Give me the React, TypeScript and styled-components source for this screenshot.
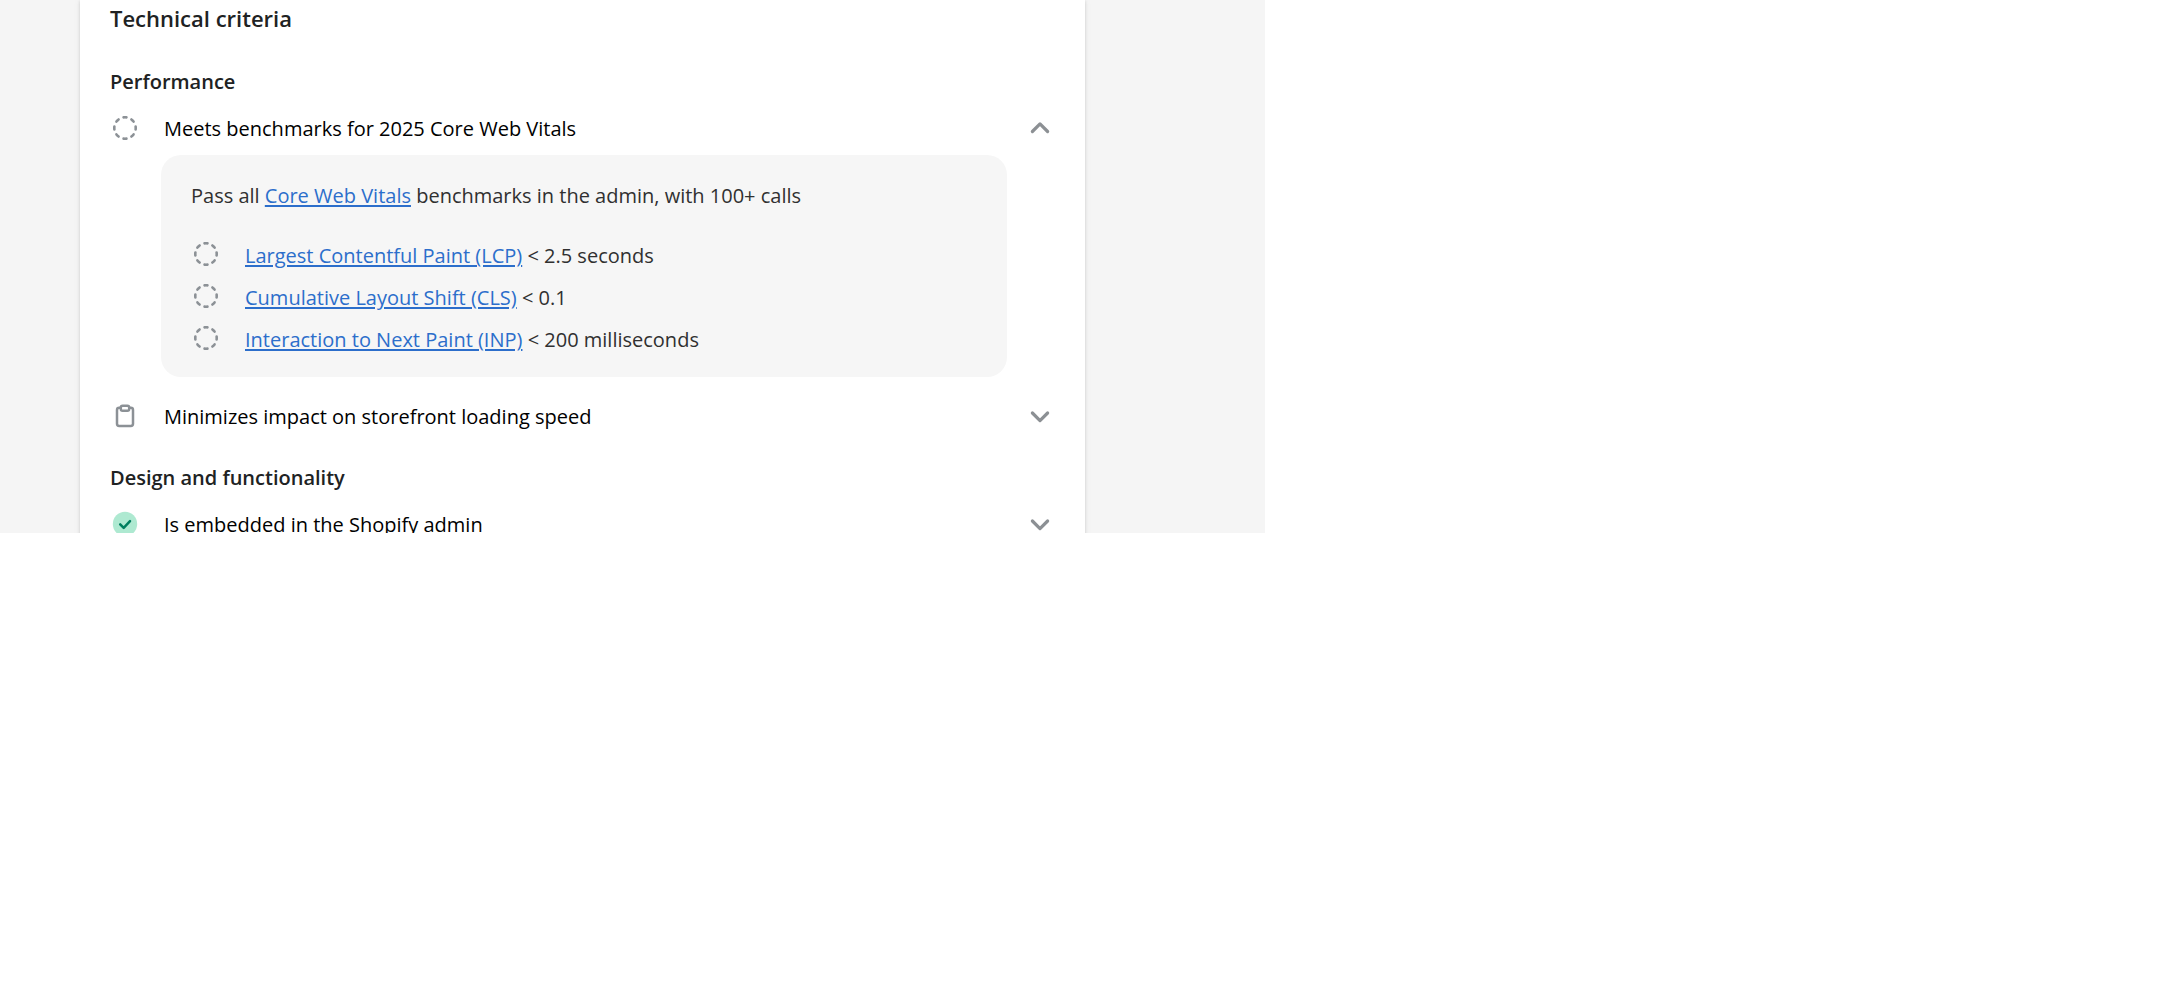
import React, { useState } from "react";
import styled, { createGlobalStyle } from "styled-components";

const GlobalStyle = createGlobalStyle`
  *, *::before, *::after { box-sizing: border-box; }
  body {
    margin: 0;
    background: #fff;
    color: #202223;
    font-family: "Segoe UI", "Open Sans", "Noto Sans", sans-serif;
    font-size: 20px;
    line-height: 32px;
  }
`;

const Viewport = styled.main`
  display: flex;
  max-width: 1265px;
  height: 533px;
  padding: 0 180px 0 80px;
  overflow: hidden;
  background: #f5f5f5;
`;

const Card = styled.article`
  flex: 1;
  min-width: 0;
  height: max-content;
  padding: 0 30px 30px;
  background: #fff;
  box-shadow: 0 0 8px rgba(23, 24, 24, 0.05), 0 1px 3px rgba(0, 0, 0, 0.15);
`;

const Title = styled.h2`
  margin: 0 0 30px;
  font-size: 22px;
  font-weight: 600;
  line-height: 36px;
`;

const Section = styled.section`
  margin-bottom: 19px;
`;

const SectionTitle = styled.h3`
  margin: 0 0 3px;
  font-size: 20px;
  font-weight: 600;
`;

const Toggle = styled.button`
  display: flex;
  align-items: center;
  gap: 24px;
  width: 100%;
  height: 54px;
  padding: 0;
  border: 0;
  background: none;
  color: #000;
  font: inherit;
  text-align: left;
  cursor: pointer;
`;

const ToggleLabel = styled.span`
  flex: 1;
  padding-top: 2px;
`;

const Icon = styled.svg`
  flex: none;
  display: block;
  width: 30px;
  height: 30px;
`;

const Panel = styled.div`
  margin: 0 48px 12px 51px;
  padding: 24px 30px 20px;
  border-radius: 20px;
  background: #f6f6f6;
  color: #303030;
  line-height: 34px;
`;

const Intro = styled.p`
  margin: 0 0 26px;
`;

const Metrics = styled.ul`
  display: grid;
  gap: 8px;
  margin: 0;
  padding: 0;
  list-style: none;
`;

const Metric = styled.li`
  display: flex;
  align-items: flex-start;
  gap: 24px;
`;

const Link = styled.a`
  color: #2c6ecb;
  text-decoration: underline;
  text-decoration-thickness: 2px;
  text-underline-offset: 2px;
`;

const PendingIcon = () => (
  <Icon viewBox="0 0 30 30" aria-hidden="true">
    <circle
      cx="15"
      cy="15"
      r="10.7"
      fill="none"
      stroke="#8c9196"
      strokeWidth="2.6"
      strokeLinecap="round"
      pathLength="80"
      strokeDasharray="3.6 6.4"
      strokeDashoffset="1.8"
    />
  </Icon>
);

const ClipboardIcon = () => (
  <Icon viewBox="0 0 30 30" fill="none" stroke="#8c9196" strokeWidth="2.5" strokeLinejoin="round" aria-hidden="true">
    <path d="M11 6.8H9.2A2.2 2.2 0 0 0 7 9v13.8A2.2 2.2 0 0 0 9.2 25h11.6a2.2 2.2 0 0 0 2.2-2.2V9a2.2 2.2 0 0 0-2.2-2.2H19" />
    <rect x="10.8" y="4.8" width="8.4" height="5" rx="1.8" />
  </Icon>
);

const DoneIcon = () => (
  <Icon viewBox="0 0 30 30" fill="none" aria-hidden="true">
    <circle cx="15" cy="15" r="12.2" fill="#aee9d1" />
    <path d="M10.2 15.3l3.5 3.5 6.3-6.7" stroke="#007f5f" strokeWidth="2.5" strokeLinecap="round" strokeLinejoin="round" />
  </Icon>
);

const Chevron = ({ open }: { open: boolean }) => (
  <Icon viewBox="0 0 30 30" fill="none" stroke="#8c9094" strokeWidth="3.2" strokeLinecap="round" strokeLinejoin="round" aria-hidden="true">
    <path d={open ? "M7.4 18.5L15 10.9l7.6 7.6" : "M7.4 12l7.6 7.6 7.6-7.6"} />
  </Icon>
);

interface CriterionProps {
  icon: React.ReactNode;
  label: string;
  defaultOpen?: boolean;
  children?: React.ReactNode;
}

const Criterion = ({ icon, label, defaultOpen = false, children }: CriterionProps) => {
  const [open, setOpen] = useState(defaultOpen);
  return (
    <>
      <Toggle type="button" aria-expanded={open} onClick={() => setOpen(!open)}>
        {icon}
        <ToggleLabel>{label}</ToggleLabel>
        <Chevron open={open} />
      </Toggle>
      {open && children && <Panel>{children}</Panel>}
    </>
  );
};

const metrics = [
  { name: "Largest Contentful Paint (LCP)", target: "< 2.5 seconds" },
  { name: "Cumulative Layout Shift (CLS)", target: "< 0.1" },
  { name: "Interaction to Next Paint (INP)", target: "< 200 milliseconds" },
];

export default function App() {
  return (
    <>
      <GlobalStyle />
      <Viewport>
        <Card>
          <Title>Technical criteria</Title>
          <Section>
            <SectionTitle>Performance</SectionTitle>
            <Criterion icon={<PendingIcon />} label="Meets benchmarks for 2025 Core Web Vitals" defaultOpen>
              <Intro>
                Pass all <Link href="#vitals">Core Web Vitals</Link> benchmarks in the admin, with 100+ calls
              </Intro>
              <Metrics>
                {metrics.map(({ name, target }) => (
                  <Metric key={name}>
                    <PendingIcon />
                    <span>
                      <Link href="#vitals">{name}</Link> {target}
                    </span>
                  </Metric>
                ))}
              </Metrics>
            </Criterion>
            <Criterion icon={<ClipboardIcon />} label="Minimizes impact on storefront loading speed" />
          </Section>
          <Section>
            <SectionTitle>Design and functionality</SectionTitle>
            <Criterion icon={<DoneIcon />} label="Is embedded in the Shopify admin" />
          </Section>
        </Card>
      </Viewport>
    </>
  );
}
